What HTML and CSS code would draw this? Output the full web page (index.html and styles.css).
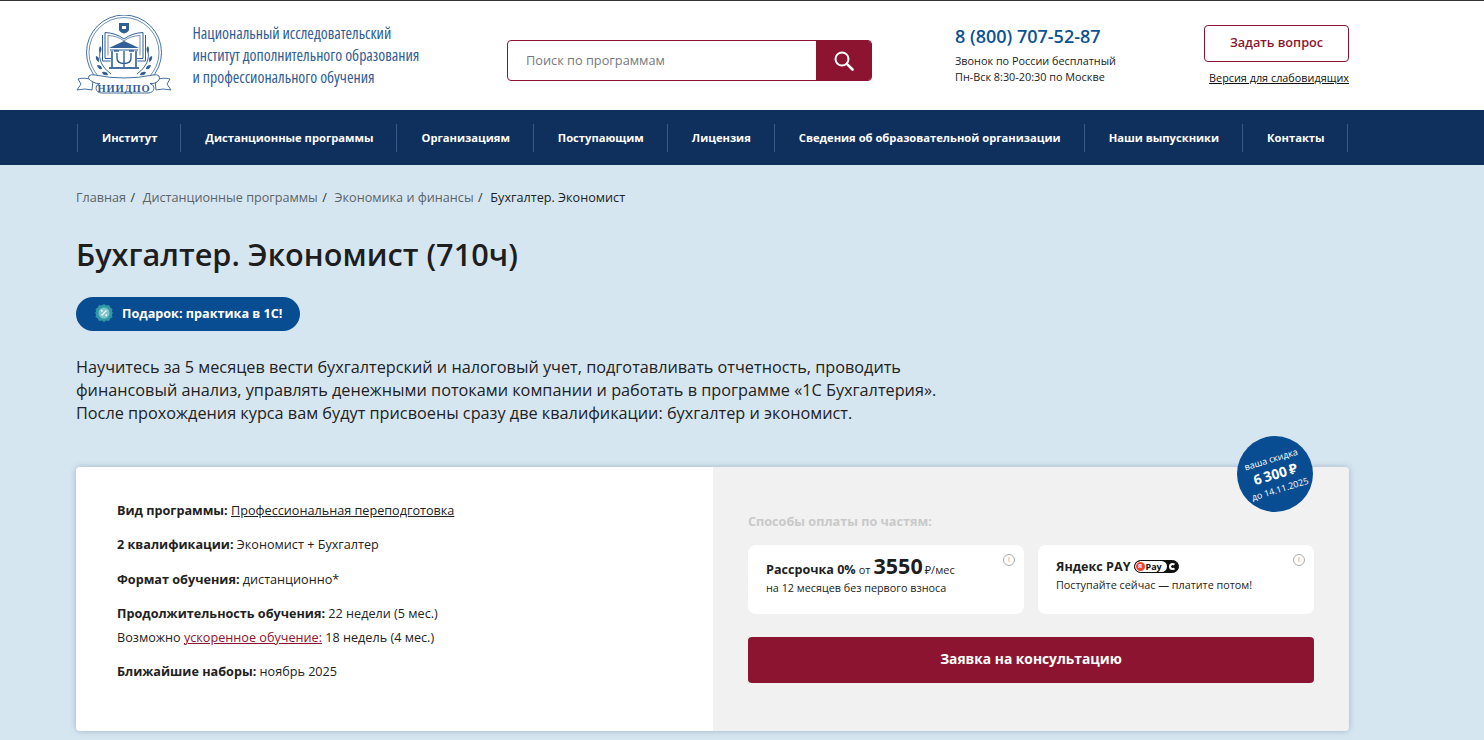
FILE: index.html
```html
<!DOCTYPE html>
<html lang="ru">
<head>
<meta charset="utf-8">
<title>Бухгалтер. Экономист</title>
<link rel="stylesheet" href="styles.css">
</head>
<body>
<header class="header">
  <div class="wrap header-row">
    <a class="logo">
      <svg class="logo-mark" width="96" height="80" viewBox="0 0 96 80" fill="none" stroke="#2f5f96">
        <circle cx="48" cy="37.500" r="37.500" stroke-width=".9"/>
        <circle cx="48" cy="37.500" r="35" stroke-width=".7"/>
        <path d="M43 8h10v6.500q0 2.500-5 4q-5-1.500-5-4z" fill="#2f5f96" stroke="none"/>
        <path d="M46 11h4v3h-4z" fill="#fff" stroke="none"/>
        <path d="M48 24Q40 18 29 17.500v26h6M48 24Q56 18 67 17.500v26h-6" stroke-width="1"/>
        <path d="M26.500 20v26h8M69.500 20v26h-8" stroke-width="1"/>
        <path d="M48 26Q42 21 32 20.500v20M48 26Q54 21 64 20.500v20" stroke-width=".7"/>
        <path d="M33 33l15-7 15 7z" fill="#2f5f96" stroke="none"/>
        <path d="M34 35h28" stroke-width="1"/>
        <path d="M33 53h30" stroke-width="1.800"/>
        <path d="M36 36v16M60 36v16" stroke-width="1.600"/>
        <path d="M41 38v5q0 5.500 7 5.500t7-5.500v-5M48 36v16M38 36h5M53 36h5" stroke-width="1.400"/>
        <path d="M24 35q-3 14 11 24M72 35q3 14-11 24" stroke-width=".9"/>
        <path d="M24 31q3 3 0 7q-2-3 0-7zM20 41q4 1 3 6q-4-2-3-6zM21 50q5 0 5 4q-4 1-5-4zM26 57q5-1 6 3q-5 1-6-3zM72 31q-3 3 0 7q2-3 0-7zM76 41q-4 1-3 6q4-2 3-6zM75 50q-5 0-5 4q4 1 5-4zM70 57q-5-1-6 3q5 1 6-3z" fill="#2f5f96" stroke="none"/>
        <path d="M17 65q-9-3-15-1l3 5-4 6q8-2 15 0z" fill="#fff" stroke-width=".9"/>
        <path d="M79 65q9-3 15-1l-3 5 4 6q-8-2-15 0z" fill="#fff" stroke-width=".9"/>
        <path d="M13 61q2-2 6-1q29 6 58 0q4-1 6 1q2 3-2 6q-3 2-7 1.500q5 2 4 5q-1 4.500-6 4.500H26q-5 0-6-4.500q-1-3 4-5q-4 .5-7-1.500q-6-3-4-6z" fill="#fff" stroke-width=".9"/>
        <text class="logo-abbr" x="48" y="77" text-anchor="middle">НИИДПО</text>
      </svg>
      <span class="logo-text">
        <span class="logo-line">Национальный исследовательский</span>
        <span class="logo-line">институт дополнительного образования</span>
        <span class="logo-line">и профессионального обучения</span>
      </span>
    </a>
    <form class="search">
      <span class="search-field">Поиск по программам</span>
      <span class="search-btn">
        <svg width="20" height="20" viewBox="0 0 20 20" fill="none" stroke="#fff" stroke-width="2">
          <circle cx="8" cy="8" r="6.500"/>
          <path d="M12.800 12.800L18.500 18.500" stroke-width="2.600" stroke-linecap="round"/>
        </svg>
      </span>
    </form>
    <div class="contacts">
      <a class="phone">8 (800) 707-52-87</a>
      <p class="hours">Звонок по России бесплатный</p>
      <p class="hours">Пн-Вск 8:30-20:30 по Москве</p>
    </div>
    <div class="actions">
      <a class="ask">Задать вопрос</a>
      <a class="impaired">Версия для слабовидящих</a>
    </div>
  </div>
</header>
<nav class="nav">
  <ul class="wrap nav-list">
    <li class="nav-item">Институт</li>
    <li class="nav-item">Дистанционные программы</li>
    <li class="nav-item">Организациям</li>
    <li class="nav-item">Поступающим</li>
    <li class="nav-item">Лицензия</li>
    <li class="nav-item">Сведения об образовательной организации</li>
    <li class="nav-item">Наши выпускники</li>
    <li class="nav-item">Контакты</li>
  </ul>
</nav>
<main class="main">
  <div class="wrap">
    <div class="crumbs">
      <a class="crumb">Главная</a><span class="sep">/</span>
      <a class="crumb">Дистанционные программы</a><span class="sep">/</span>
      <a class="crumb">Экономика и финансы</a><span class="sep">/</span>
      <span class="crumb-current">Бухгалтер. Экономист</span>
    </div>
    <h1 class="title">Бухгалтер. Экономист (710ч)</h1>
    <div class="gift">
      <svg class="gift-icon" width="18" height="18" viewBox="0 0 18 18">
        <path d="M9 0l2.300 1.400 2.700-.3 1.100 2.500 2.400 1.300-.6 2.600L18 9l-1.100 1.500.6 2.600-2.400 1.300-1.100 2.500-2.700-.3L9 18l-2.300-1.400-2.700.3-1.100-2.500L.5 13.100l.6-2.600L0 9l1.100-1.500-.6-2.600 2.400-1.300L4 1.100l2.700.3z" fill="#2f9aa5"/>
        <circle cx="9" cy="9" r="5.500" fill="#7fc4cc"/>
        <path d="M6.500 11.500l5-5" stroke="#fff" stroke-width="1.300"/>
        <circle cx="6.800" cy="6.800" r="1" fill="#fff"/>
        <circle cx="11.200" cy="11.200" r="1" fill="#fff"/>
      </svg>
      <span>Подарок: практика в 1С!</span>
    </div>
    <p class="lead">Научитесь за 5 месяцев вести бухгалтерский и налоговый учет, подготавливать отчетность, проводить финансовый анализ, управлять денежными потоками компании и работать в программе «1С Бухгалтерия». После прохождения курса вам будут присвоены сразу две квалификации: бухгалтер и экономист.</p>
    <section class="card">
      <div class="discount">
        <div class="discount-inner">
          <span class="d-small">ваша скидка</span>
          <span class="d-big">6 300 ₽</span>
          <span class="d-small">до 14.11.2025</span>
        </div>
      </div>
      <div class="card-left">
        <p class="fact"><b>Вид программы:</b> <a class="u">Профессиональная переподготовка</a></p>
        <p class="fact"><b>2 квалификации:</b> Экономист + Бухгалтер</p>
        <p class="fact"><b>Формат обучения:</b> дистанционно*</p>
        <p class="fact fact-tight"><b>Продолжительность обучения:</b> 22 недели (5 мес.)</p>
        <p class="fact">Возможно <a class="u u-red">ускоренное обучение:</a> 18 недель (4 мес.)</p>
        <p class="fact"><b>Ближайшие наборы:</b> ноябрь 2025</p>
      </div>
      <div class="card-right">
        <p class="pay-title">Способы оплаты по частям:</p>
        <div class="pay-row">
          <div class="pay-card">
            <span class="info">i</span>
            <p class="pay-main"><b>Рассрочка 0%</b> <span class="pay-from">от</span> <b class="price">3550</b> <span class="pay-from">₽/мес</span></p>
            <p class="pay-sub">на 12 месяцев без первого взноса</p>
          </div>
          <div class="pay-card pay-card-y">
            <span class="info">i</span>
            <p class="pay-main"><b>Яндекс PAY</b>
              <span class="ypay"><span class="ypay-l"><span class="ypay-dot">Я</span>Pay</span><span class="ypay-r"></span></span>
            </p>
            <p class="pay-sub pay-sub-y">Поступайте сейчас — платите потом!</p>
          </div>
        </div>
        <a class="cta">Заявка на консультацию</a>
      </div>
    </section>
  </div>
</main>
</body>
</html>
```
FILE: styles.css
```css
* { box-sizing: border-box; }
html, body { margin: 0; padding: 0; height: 740px; overflow: hidden; }
body { font-family: "Open Sans", "Noto Sans", sans-serif; color: #1e1e1e; background: #d6e6f1; border-top: 1px solid #333; }
p, ul, h1 { margin: 0; padding: 0; }
.wrap { width: 1273px; margin-left: 76px; }
.header { background: #fff; height: 109px; }
.header-row { display: flex; align-items: flex-start; height: 100%; }
.logo { display: flex; width: 431px; padding-top: 14px; }
.logo-mark { flex: none; margin-right: 20.500px; }
.logo-abbr { font-family: "Liberation Serif", serif; font-size: 10.500px; font-weight: 700; fill: #2f5f96; stroke: none; letter-spacing: .8px; }
.logo-text { display: flex; flex-direction: column; padding-top: 7px; color: #2f5d95; }
.logo-line { display: block; height: 22px; font-size: 15.800px; line-height: 22px; white-space: nowrap; font-stretch: 75%; }
.search { display: flex; width: 365px; height: 41px; margin-top: 39px; border: 1px solid #8c1430; border-radius: 4px; overflow: hidden; }
.search-field { flex: 1; padding-left: 18px; font-size: 12.750px; line-height: 38px; color: #75797d; }
.search-btn { width: 56px; margin: -1px; background: #8c1430; display: flex; align-items: center; justify-content: center; }
.contacts { width: 249px; margin-left: 83px; padding-top: 22px; }
.phone { display: block; font-size: 18px; line-height: 26px; font-weight: 600; color: #0c5394; margin-bottom: 4px; }
.hours { font-size: 10.850px; line-height: 16px; color: #222; }
.actions { width: 145px; padding-top: 24px; display: flex; flex-direction: column; align-items: flex-end; }
.ask { display: block; width: 145px; height: 37px; border: 1px solid #8c1430; border-radius: 4px; text-align: center; font-size: 12.700px; font-weight: 600; line-height: 33px; color: #8c1430; }
.impaired { margin-top: 8px; font-size: 10.850px; line-height: 16px; color: #111; text-decoration: underline; }
.nav { background: #0f2f5d; height: 55px; }
.nav-list { list-style: none; display: flex; align-items: center; height: 55px; padding-left: 1px; }
.nav-item { height: 28px; padding: 0 23px 0 24px; border-left: 1px solid #3b5a83; font-size: 11.200px; font-weight: 700; line-height: 28px; color: #fff; white-space: nowrap; }
.nav-item:last-child { border-right: 1px solid #3b5a83; padding-right: 22px; }
.crumbs { padding-top: 23px; font-size: 12.650px; line-height: 18px; color: #5d6468; white-space: nowrap; height: 42px; }
.sep { margin: 0 4.400px; color: #333; }
.crumb-current { color: #222; }
.title { margin-top: 26px; font-size: 30.700px; line-height: 42px; font-weight: 600; color: #1e1e1e; }
.gift { display: flex; align-items: center; width: 224px; height: 34px; margin-top: 22px; padding: 0 0 3px 19px; border-radius: 17px; background: #084d91; color: #fff; font-size: 12.650px; font-weight: 700; }
.gift-icon { margin-right: 9px; flex: none; }
.lead { width: 880px; margin-top: 25px; font-size: 16.250px; line-height: 23px; color: #222; }
.card { position: relative; display: flex; height: 264px; margin-top: 42px; border-radius: 4px; box-shadow: 0 0 6px rgba(60, 90, 120, .35); }
.card-left { width: 637px; padding: 32.800px 0 0 41px; background: #fff; border-radius: 4px 0 0 4px; }
.card-right { flex: 1; padding: 45px 35px 0; background: #f1f1f1; border-radius: 0 4px 4px 0; }
.fact { font-size: 12.650px; line-height: 20px; margin-bottom: 14.400px; color: #222; white-space: nowrap; }
.fact b { font-weight: 700; }
.fact-tight { margin-bottom: 4px; }
.u { text-decoration: underline; }
.u-red { color: #8c1430; }
.discount { position: absolute; top: -31px; right: 36px; width: 76px; height: 76px; border-radius: 50%; background: #084d91; color: #fff; display: flex; align-items: center; justify-content: center; z-index: 2; }
.discount-inner { display: flex; flex-direction: column; align-items: center; transform: rotate(-17deg); }
.d-small { font-size: 9px; line-height: 13px; white-space: nowrap; }
.d-big { font-size: 13.800px; line-height: 18px; font-weight: 700; white-space: nowrap; word-spacing: -1px; }
.pay-title { font-size: 12.650px; font-weight: 700; line-height: 18px; color: #c9c9c9; }
.pay-row { display: flex; gap: 14px; margin-top: 15px; }
.pay-card { position: relative; width: 276px; height: 69px; padding: 9px 18px 0; border-radius: 8px; background: #fff; }
.pay-card-y { padding-top: 12px; padding-left: 18px; }
.info { position: absolute; top: 9px; right: 9px; width: 12px; height: 12px; border: 1px solid #aaa; border-radius: 50%; font-size: 7px; line-height: 10px; text-align: center; color: #999; }
.pay-main { display: flex; align-items: baseline; gap: 3px; font-size: 12.600px; line-height: 24px; color: #1e1e1e; white-space: nowrap; }
.pay-card-y .pay-main { align-items: center; line-height: 19px; gap: 3px; }
.pay-from { font-size: 11px; }
.price { font-size: 21.500px; font-weight: 700; line-height: 24px; margin: 0 -1px 0 0; }
.pay-sub { margin-top: -2px; font-size: 10.800px; line-height: 16px; color: #222; white-space: nowrap; }
.pay-sub-y { margin-top: 1px; }
.ypay { display: inline-flex; width: 45px; height: 13px; border: 1px solid #111; border-radius: 7px; overflow: hidden; background: #111; }
.ypay-l { display: flex; align-items: center; gap: 1px; width: 32px; height: 100%; background: #fff; border-radius: 7px; font-size: 9px; font-weight: 700; line-height: 11px; color: #111; }
.ypay-dot { flex: none; width: 9px; height: 9px; margin-left: 1px; border-radius: 50%; background: #f0452b; color: #fff; font-size: 6px; line-height: 9px; text-align: center; }
.ypay-r { width: 7px; height: 7px; margin: 2px 0 0 2px; border: 2px solid #fff; border-right-color: transparent; border-radius: 50%; }
.cta { display: block; width: 566px; height: 46px; margin-top: 23px; border-radius: 4px; background: #8c1430; color: #fff; text-align: center; font-size: 13.800px; font-weight: 700; line-height: 44px; }
```
